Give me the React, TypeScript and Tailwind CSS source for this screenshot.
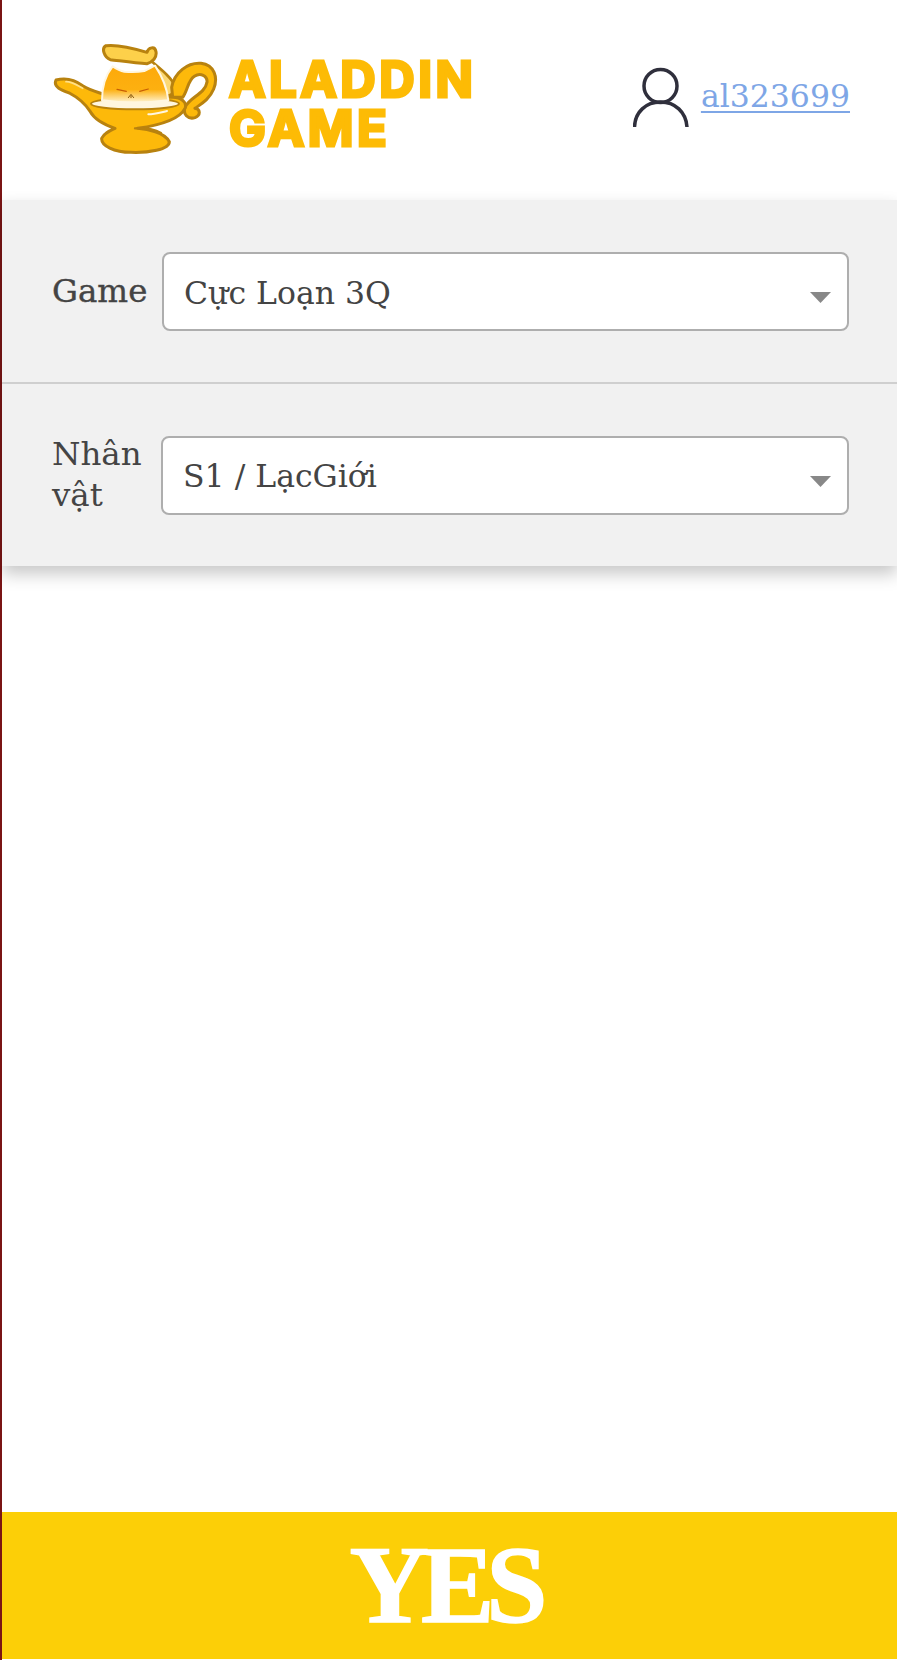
function LampLogo() {
  return (
    <svg viewBox="30 30 510 345" className="-mt-[7px] h-[115px] w-[170px] shrink-0 -translate-x-[1px] blur-[0.5px]">
      <defs>
        <linearGradient id="catFill" x1="0" y1="0" x2="0" y2="1">
          <stop offset="0%" stopColor="#fda90a" />
          <stop offset="65%" stopColor="#fdb010" />
          <stop offset="100%" stopColor="#fff3d0" />
        </linearGradient>
      </defs>
      <g stroke="#b8820f" strokeWidth="9" strokeLinejoin="round" strokeLinecap="round">
        {/* chain */}
        <path d="M335 100 C365 125 395 150 402 172 C400 190 392 198 382 200" fill="#fcd873" strokeWidth="8" />
        {/* handle */}
        <path
          d="M392 175 C400 130 440 100 480 103 C520 108 532 145 518 180 C505 212 480 225 462 238 C478 240 480 258 462 266 C440 272 425 255 432 235 C445 205 492 195 498 160 C500 140 478 130 460 142 C440 155 440 185 425 205 L395 205 Z"
          fill="#fdb90a"
        />
        {/* lamp body */}
        <path
          d="M45 153 C75 145 105 155 125 170 C145 182 165 188 185 195 L395 205 C420 205 440 220 432 238 C420 262 380 285 290 298 C320 300 370 310 385 338 C385 362 320 372 270 370 C220 370 180 350 182 328 C190 312 205 306 222 298 C185 285 160 270 148 248 C130 220 110 205 85 192 C65 185 35 175 45 153 Z"
          fill="#fdb90a"
        />
        {/* rim */}
        <ellipse cx="282" cy="224" rx="132" ry="17" fill="#fff6e0" strokeWidth="6" />
        {/* cat */}
        <path
          d="M183 214 C183 175 192 140 215 112 C230 122 240 126 250 128 C270 130 290 130 310 126 C320 122 330 116 342 110 C362 140 378 175 382 214 C320 222 240 222 183 214 Z"
          fill="url(#catFill)"
          stroke="#fff6e0"
          strokeWidth="6"
        />
        {/* lid */}
        <path
          d="M195 50 C235 45 285 60 318 70 C322 55 342 50 345 68 C348 85 335 100 318 104 C280 102 235 95 208 92 C190 85 180 58 195 50 Z"
          fill="#fdd04a"
        />
      </g>
      <path d="M75 158 C95 158 110 170 125 178" stroke="#ffe08a" strokeWidth="5" fill="none" strokeLinecap="round" />
      <path d="M322 256 C340 256 360 250 378 246" stroke="#fff6e0" strokeWidth="6" fill="none" strokeLinecap="round" />
      <path d="M282 298 C310 296 335 298 360 312" stroke="#b8820f" strokeWidth="7" fill="none" strokeLinecap="round" />
      <path d="M228 181 L256 187 M296 187 L322 180" stroke="#c75d05" strokeWidth="3.5" fill="none" strokeLinecap="round" />
      <path d="M262 206 L270 196 L278 206 M270 200 L270 206" stroke="#8a5a10" strokeWidth="3" fill="none" strokeLinecap="round" />
    </svg>
  );
}

function UserIcon() {
  return (
    <svg viewBox="0 0 56 60" className="h-[60px] w-[56px] shrink-0" fill="none" stroke="#2f2f3c" strokeWidth="3.5">
      <circle cx="27.5" cy="19" r="16.5" />
      <path d="M1.5 60 C2 45 13 35 27.5 35 C42 35 53 45 54 60" />
    </svg>
  );
}

function SelectRow({
  label,
  value,
  rowClass,
  labelClass,
}: {
  label: string;
  value: string;
  rowClass: string;
  labelClass: string;
}) {
  return (
    <div className={`flex items-center pl-[50px] pr-[48px] ${rowClass}`}>
      <label className={`shrink-0 text-[32.5px] text-[#444444] ${labelClass}`}>{label}</label>
      <div className="relative min-w-0 flex-1">
        <select
          defaultValue={value}
          className="block h-[79px] w-full appearance-none rounded-lg border-2 border-[#aeaeae] bg-white pl-[20px] pr-12 pt-[4px] text-[31.5px] text-[#444444] outline-none"
        >
          <option>{value}</option>
        </select>
        <svg viewBox="0 0 21 11" className="pointer-events-none absolute right-[18px] top-[40px] h-[11px] w-[21px]">
          <polygon points="0,0 21,0 10.5,11" fill="#888888" />
        </svg>
      </div>
    </div>
  );
}

export default function App() {
  return (
    <div className="flex h-[1660px] w-full flex-col border-l-2 border-[#7a1414] bg-white font-['DejaVu_Serif','Liberation_Serif',serif]">
      <header className="flex h-[200px] items-center justify-between pl-[50px] pr-[47px]">
        <div className="flex items-center gap-[7px]">
          <LampLogo />
          <div className="mt-[7px] font-['Inter',sans-serif] text-[49px] font-bold leading-[49px] tracking-[3.5px] text-[#fdbb05] [-webkit-text-stroke:3px_#fdbb05]">
            <div>ALADDIN</div>
            <div>GAME</div>
          </div>
        </div>
        <div className="flex items-center gap-[12px] pb-[7px]">
          <UserIcon />
          <a href="#" className="text-[31.5px] text-[#7ea6e6] underline decoration-2 underline-offset-4">
            al323699
          </a>
        </div>
      </header>

      <section className="bg-[#f1f1f1] shadow-[0_8px_16px_rgba(0,0,0,0.22)]">
        <SelectRow
          label="Game"
          value="Cực Loạn 3Q"
          rowClass="border-b-2 border-[#cfcfcf] pt-[52px] pb-[51px]"
          labelClass="w-[110px] [-webkit-text-stroke:0.4px_#444444]"
        />
        <SelectRow
          label="Nhân vật"
          value="S1 / LạcGiới"
          rowClass="pt-[50px] pb-[50px]"
          labelClass="w-[109px] leading-[41px]"
        />
      </section>

      <main className="flex-1" />

      <footer className="mb-[1px] flex h-[147px] items-center justify-center bg-[#fccf07] pr-[10px] font-['Liberation_Serif',serif] text-[110px] font-bold tracking-[-8px] text-white [-webkit-text-stroke:1.5px_#ffffff]">
        YES
      </footer>
    </div>
  );
}
